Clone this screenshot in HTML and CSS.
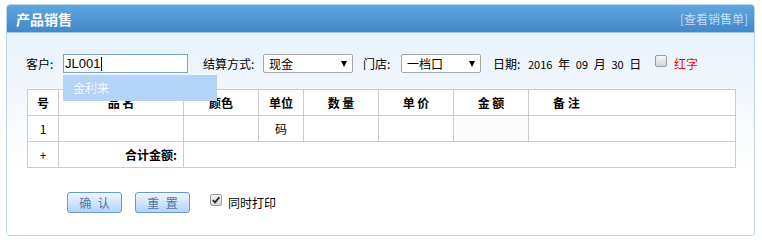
FILE: index.html
```html
<!DOCTYPE html>
<html lang="zh-CN">
<head>
<meta charset="utf-8">
<title>产品销售</title>
<link rel="stylesheet" href="styles.css">
</head>
<body>
<div class="panel">
  <div class="panel-head">
    <span class="title">产品销售</span>
    <span class="link">[查看销售单]</span>
  </div>
  <div class="panel-body">
    <div class="form-row">
      <span class="lbl lbl-cust">客户:</span>
      <div class="combo">
        <div class="input">JL001<span class="caret"></span></div>
        <div class="suggest">金利来</div>
      </div>
      <span class="lbl lbl-pay">结算方式:</span>
      <div class="select sel-pay"><span>现金</span><i class="arrow"></i></div>
      <span class="lbl lbl-store">门店:</span>
      <div class="select sel-store"><span>一档口</span><i class="arrow"></i></div>
      <span class="lbl lbl-date">日期:</span>
      <span class="date"><span class="num">2016</span> 年 <span class="num">09</span> 月 <span class="num">30</span> 日</span>
      <span class="chk chk-red"></span>
      <span class="red">红字</span>
    </div>

    <table class="grid">
      <colgroup>
        <col class="c-no"><col class="c-name"><col class="c-color"><col class="c-unit">
        <col class="c-qty"><col class="c-price"><col class="c-amt"><col class="c-note">
      </colgroup>
      <thead>
        <tr>
          <th>号</th><th>品 名</th><th>颜色</th><th>单位</th>
          <th>数 量</th><th>单 价</th><th>金 额</th><th class="th-note">备 注</th>
        </tr>
      </thead>
      <tbody>
        <tr>
          <td class="center">1</td><td></td><td></td><td class="center">码</td>
          <td></td><td></td><td class="amt"></td><td></td>
        </tr>
        <tr>
          <td class="center">+</td><td class="total-lbl">合计金额:</td><td colspan="6"></td>
        </tr>
      </tbody>
    </table>

    <div class="actions">
      <button class="btn">确 认</button>
      <button class="btn">重 置</button>
      <span class="chk chk-on"><svg width="10" height="10" viewBox="0 0 10 10"><path d="M1.8 5.2 L4 7.4 L8.4 2.2" fill="none" stroke="#2b2b2b" stroke-width="1.8"/></svg></span>
      <span class="print">同时打印</span>
    </div>
  </div>
</div>
</body>
</html>
```

FILE: styles.css
```css
body {
  margin: 0;
  background: #fff;
  font-family: "Noto Sans CJK SC", "DejaVu Sans", sans-serif;
  font-size: 12px;
  color: #000;
}

.panel {
  margin: 4px 6px 0;
  width: 747px;
  border: 1px solid #b9d3e8;
  border-radius: 4px;
  overflow: hidden;
}

.panel-head {
  height: 27px;
  border-bottom: 1px solid #a9c8e4;
  background: linear-gradient(#5fa7e0, #4288ca);
  display: flex;
  align-items: center;
  justify-content: space-between;
  padding: 0 6px 0 9px;
}

.title {
  color: #fff;
  font-size: 14px;
  font-weight: bold;
}

.link {
  color: #c6dcf1;
  font-size: 12px;
}

.panel-body {
  background: linear-gradient(#e8f1fa, #ffffff 135px);
  padding: 21px 20px 22px;
}

.form-row {
  display: flex;
  align-items: center;
  height: 19px;
  margin-left: -1px;
}

.lbl { flex: none; }
.lbl-cust { width: 37px; }
.lbl-pay { width: 60px; margin-left: 15px; }
.lbl-store { width: 38px; margin-left: 10px; }
.lbl-date { width: 35px; margin-left: 12px; }

.combo {
  position: relative;
  flex: none;
}

.input {
  box-sizing: border-box;
  width: 125px;
  height: 19px;
  border: 1px solid #79a2d8;
  background: #fff;
  padding-left: 1px;
  display: flex;
  align-items: center;
  font-family: "Liberation Sans", Arial, sans-serif;
  font-size: 13px;
}

.caret {
  display: inline-block;
  width: 1px;
  height: 14px;
  background: #000;
  margin-left: 1px;
}

.suggest {
  position: absolute;
  top: 21px;
  left: 0;
  z-index: 5;
  width: 154px;
  height: 26px;
  line-height: 26px;
  padding-left: 10px;
  box-sizing: border-box;
  background: #b3d3f7;
  color: #f2f7fe;
  font-size: 12px;
}

.select {
  flex: none;
  box-sizing: border-box;
  height: 19px;
  border: 1px solid #a7a7a7;
  border-radius: 2px;
  background: #fff;
  display: flex;
  align-items: center;
  justify-content: space-between;
  padding: 0 5px 0 5px;
}
.sel-pay { width: 90px; }
.sel-store { width: 80px; }

.arrow {
  width: 0;
  height: 0;
  border-left: 3.5px solid transparent;
  border-right: 3.5px solid transparent;
  border-top: 6px solid #000;
}

.date {
  flex: none;
  width: 127px;
  word-spacing: 3px;
  white-space: nowrap;
}
.num { font-size: 11px; }

.chk {
  flex: none;
  box-sizing: border-box;
  width: 12px;
  height: 12px;
  border: 1px solid #9a9a9a;
  border-radius: 2px;
  background: linear-gradient(#f6f6f6, #d6d6d6);
  display: flex;
  align-items: center;
  justify-content: center;
}

.chk-red {
  align-self: flex-start;
  margin-top: 1px;
}

.red {
  color: #f00;
  margin-left: 7px;
}

.grid {
  margin-top: 16px;
  border-collapse: collapse;
  table-layout: fixed;
  width: 708px;
  background: #fff;
}

.c-no { width: 31px; }
.c-name { width: 125px; }
.c-color { width: 75px; }
.c-unit { width: 45px; }
.c-qty { width: 75px; }
.c-price { width: 75px; }
.c-amt { width: 75px; }
.c-note { width: 207px; }

.grid th,
.grid td {
  border: 1px solid #cbcbcb;
  height: 25px;
  padding: 0;
  font-size: 12px;
}

.grid th {
  font-weight: bold;
  text-align: center;
}

.grid .th-note {
  text-align: left;
  padding-left: 24px;
}

.center { text-align: center; }

.grid .amt { background: #fafcfe; }

.grid .total-lbl {
  text-align: right;
  padding-right: 6px;
  font-weight: bold;
}

.actions {
  margin-top: 24px;
  margin-left: 40px;
  display: flex;
  align-items: center;
  height: 21px;
}

.btn {
  box-sizing: border-box;
  width: 55px;
  height: 21px;
  margin: 0 13px 0 0;
  padding: 0;
  border: 1px solid #6a98d0;
  border-radius: 3px;
  background: linear-gradient(#eef6fe, #b2d5f9);
  color: #5573a6;
  font-family: "Noto Sans CJK SC", sans-serif;
  font-size: 12px;
  word-spacing: 4px;
}

.actions .btn + .btn { margin-right: 20px; }

.chk-on {
  align-self: flex-start;
  margin-top: 2px;
}

.print {
  margin-left: 6px;
}
```
